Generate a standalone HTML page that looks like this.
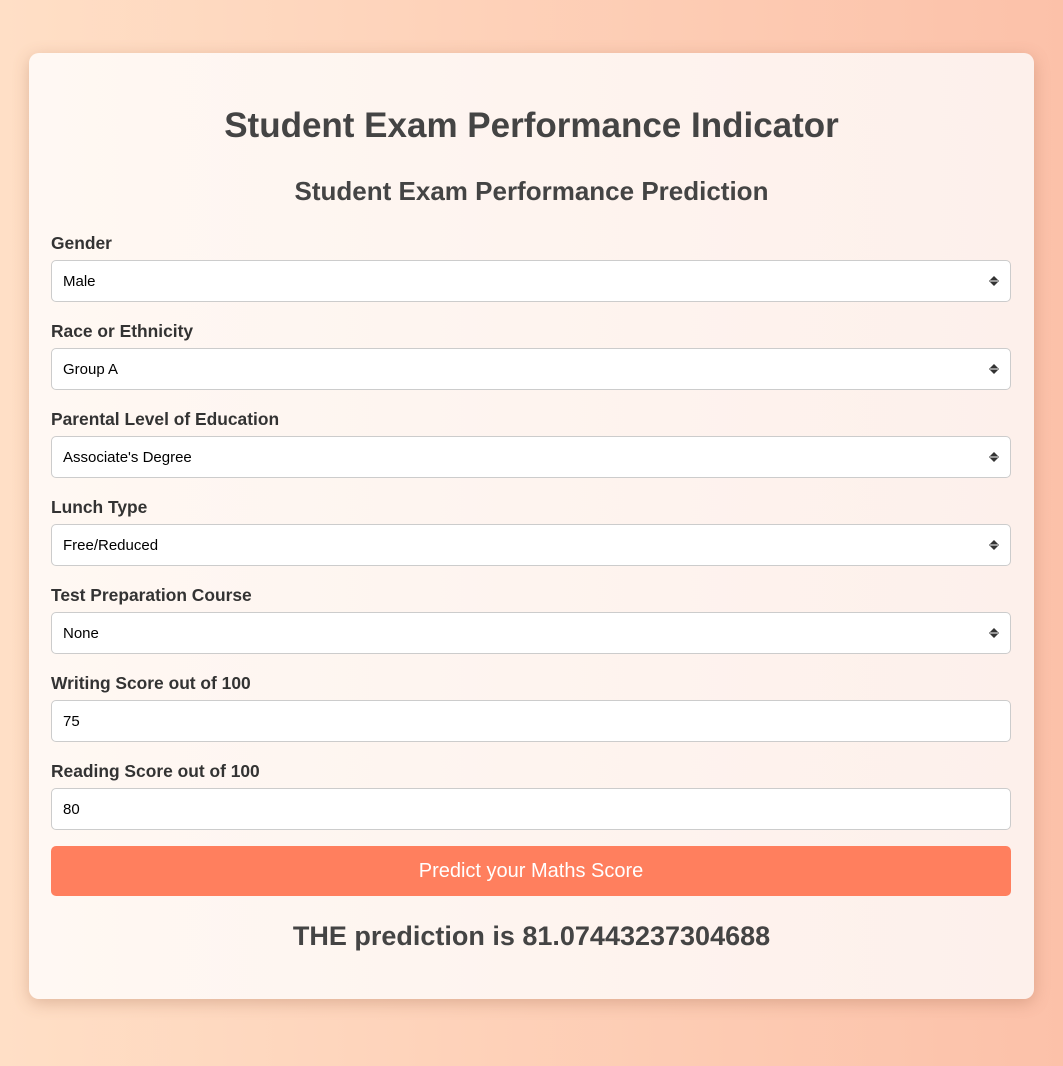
<!DOCTYPE html>
<html><head><meta charset="utf-8"><style>
*{box-sizing:border-box;margin:0;padding:0}
html,body{width:1063px;height:1066px;overflow:hidden}
body{background:linear-gradient(90deg,#ffdfc6,#fcc1a9);font-family:"Liberation Sans",sans-serif;color:#333;position:relative}
.card{position:absolute;left:29px;top:53px;width:1005px;height:946px;border-radius:10px;background:linear-gradient(90deg,#fff8f3,#fdf0eb);box-shadow:0 4px 16px rgba(150,90,60,.3)}
h1{position:absolute;left:0;right:0;top:106px;text-align:center;font-size:35px;font-weight:bold;color:#444}
h2{position:absolute;left:0;right:0;top:176px;text-align:center;font-size:26px;font-weight:bold;color:#444}
.lbl{position:absolute;left:51px;font-size:17.4px;font-weight:bold;color:#333}
.inp{position:absolute;left:51px;width:960px;height:42px;border:1px solid #ccc;border-radius:5px;background:#fff;font-size:15px;color:#000;padding:12px 0 0 11px}
.inp svg{position:absolute;right:11px;top:14px}
.btn{position:absolute;left:51px;top:846px;width:960px;height:50px;background:#ff7f5e;border-radius:5px;color:#fff;font-size:20px;text-align:center;line-height:50px}
.res{position:absolute;left:0;right:0;top:921px;text-align:center;font-size:27px;font-weight:bold;color:#444}
</style></head><body>
<div class="card"></div>
<h1>Student Exam Performance Indicator</h1>
<h2>Student Exam Performance Prediction</h2>

<div class="lbl" style="top:233px">Gender</div>
<div class="inp" style="top:260px">Male<svg width="10" height="12" viewBox="0 0 10 12"><path d="M1 5 L5 1 L9 5Z M1 7 L5 11 L9 7Z" fill="#333"/><path d="M0 6H10" stroke="#333" stroke-width="1"/></svg></div>

<div class="lbl" style="top:321px">Race or Ethnicity</div>
<div class="inp" style="top:348px">Group A<svg width="10" height="12" viewBox="0 0 10 12"><path d="M1 5 L5 1 L9 5Z M1 7 L5 11 L9 7Z" fill="#333"/><path d="M0 6H10" stroke="#333" stroke-width="1"/></svg></div>

<div class="lbl" style="top:409px">Parental Level of Education</div>
<div class="inp" style="top:436px">Associate's Degree<svg width="10" height="12" viewBox="0 0 10 12"><path d="M1 5 L5 1 L9 5Z M1 7 L5 11 L9 7Z" fill="#333"/><path d="M0 6H10" stroke="#333" stroke-width="1"/></svg></div>

<div class="lbl" style="top:497px">Lunch Type</div>
<div class="inp" style="top:524px">Free/Reduced<svg width="10" height="12" viewBox="0 0 10 12"><path d="M1 5 L5 1 L9 5Z M1 7 L5 11 L9 7Z" fill="#333"/><path d="M0 6H10" stroke="#333" stroke-width="1"/></svg></div>

<div class="lbl" style="top:585px">Test Preparation Course</div>
<div class="inp" style="top:612px">None<svg width="10" height="12" viewBox="0 0 10 12"><path d="M1 5 L5 1 L9 5Z M1 7 L5 11 L9 7Z" fill="#333"/><path d="M0 6H10" stroke="#333" stroke-width="1"/></svg></div>

<div class="lbl" style="top:673px">Writing Score out of 100</div>
<div class="inp" style="top:700px">75</div>

<div class="lbl" style="top:761px">Reading Score out of 100</div>
<div class="inp" style="top:788px">80</div>

<div class="btn">Predict your Maths Score</div>
<div class="res">THE prediction is 81.07443237304688</div>
</body></html>
